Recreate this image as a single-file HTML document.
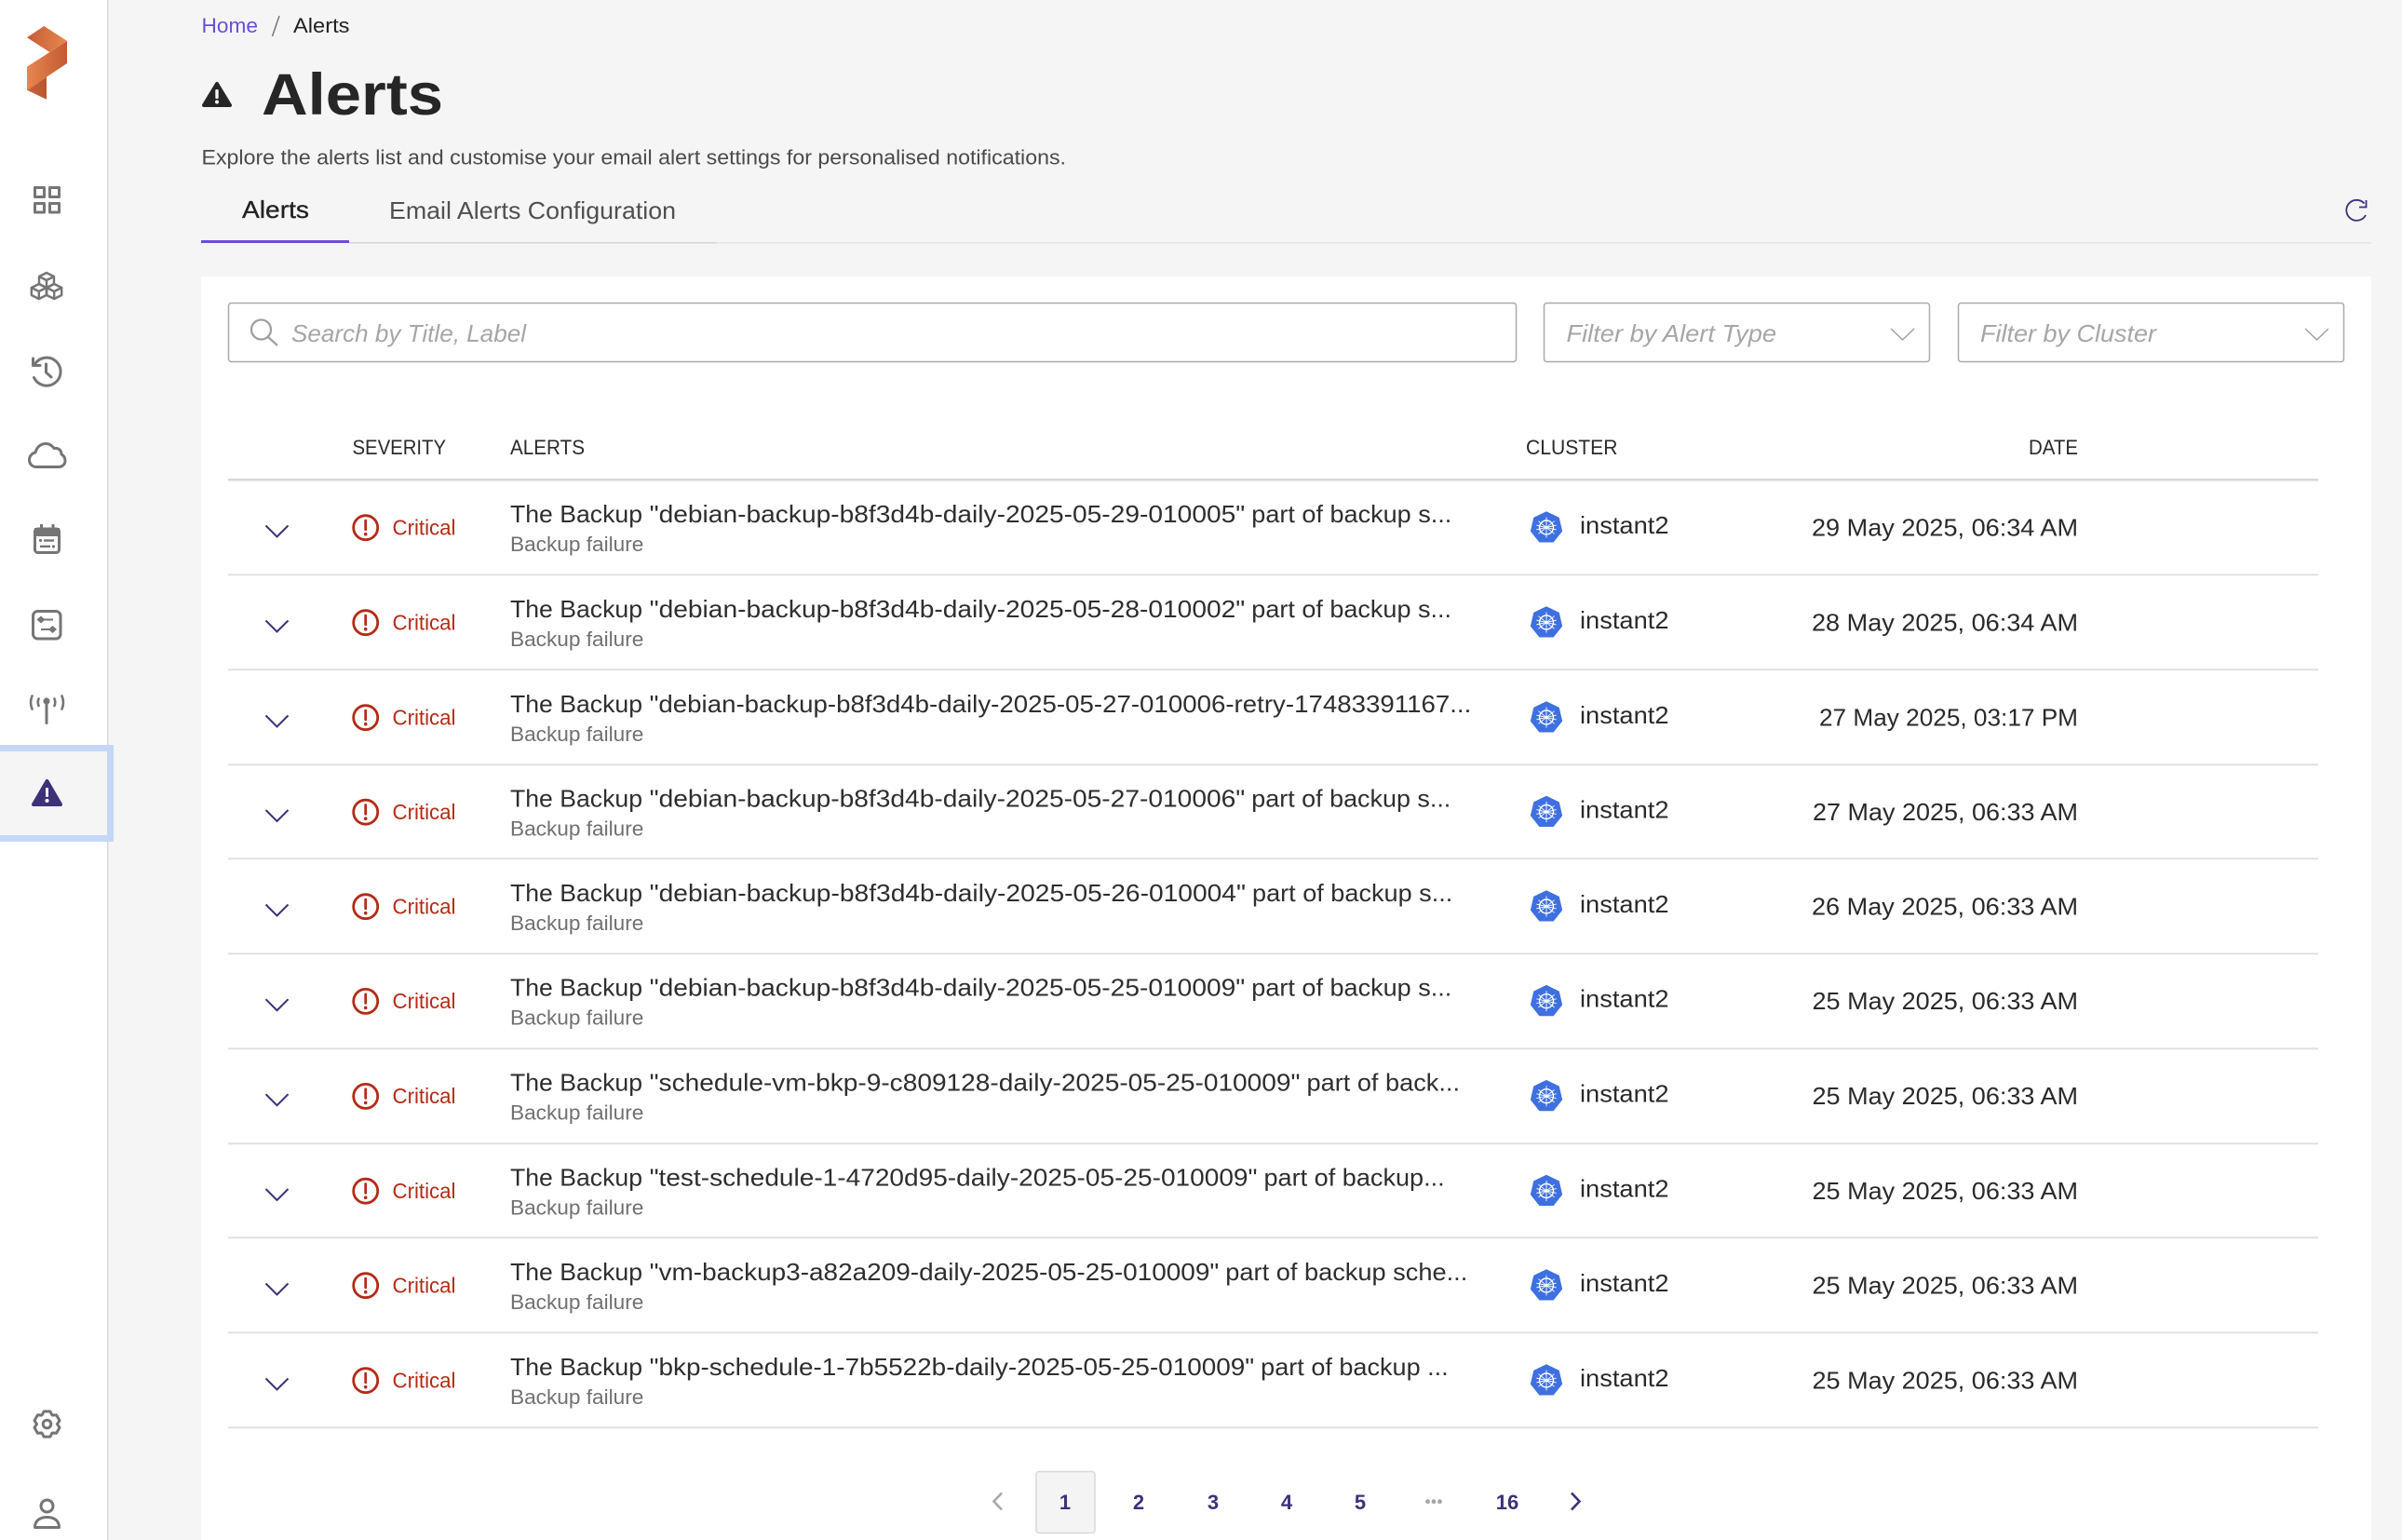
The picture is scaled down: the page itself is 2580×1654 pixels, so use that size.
<!DOCTYPE html>
<html lang="en">
<head>
<meta charset="utf-8">
<title>Alerts</title>
<style>
html,body{margin:0;padding:0;background:#f5f5f5}
svg{display:block}
text{font-family:"Liberation Sans",sans-serif}
.ic{fill:none;stroke:#757575;stroke-width:3;stroke-linecap:round;stroke-linejoin:round}
.th{font-size:22px;fill:#2a2a2a}
.ti{font-size:26px;fill:#2e2e2e}
.su{font-size:22px;fill:#707070}
.cr{font-size:23px;fill:#b42b17}
.cl{font-size:26px;fill:#2a2a2a}
.da{font-size:26px;fill:#2a2a2a}
.ph{font-size:26px;font-style:italic;fill:#a6a6a6}
.pg{font-size:22px;font-weight:bold;fill:#3d3178;text-anchor:middle}
.ln{stroke:#dfdfdf;stroke-width:1.8}
</style>
</head>
<body>
<svg xmlns="http://www.w3.org/2000/svg" width="2580" height="1654" viewBox="0 0 2580 1654">
<defs>
<linearGradient id="g1" x1="0" y1="0" x2="1" y2="0"><stop offset="0" stop-color="#c55c35"/><stop offset="1" stop-color="#e68850"/></linearGradient>
<linearGradient id="g2" x1="0" y1="0" x2="1" y2="0"><stop offset="0" stop-color="#e6874f"/><stop offset="1" stop-color="#c35a32"/></linearGradient>
<linearGradient id="g3" x1="0" y1="0" x2="1" y2="0"><stop offset="0" stop-color="#c9653c"/><stop offset="1" stop-color="#b9552f"/></linearGradient>
<g id="chev"><path d="M285.5 564.5L297.5 576.5L309.5 564.5" fill="none" stroke="#3d3178" stroke-width="2"/></g>
<g id="crit"><circle cx="392.7" cy="566.7" r="13" fill="none" stroke="#b42b17" stroke-width="2.8"/><path d="M392.7 559.2V568.7" stroke="#b42b17" stroke-width="2.8" stroke-linecap="round"/><circle cx="392.7" cy="573.7" r="1.8" fill="#b42b17"/></g>
<g id="k8s"><polygon points="1661,549.8 1674.3,556.2 1677.6,570.4 1668.4,582 1653.6,582 1644.4,570.4 1647.7,556.2" fill="#3f70e0" stroke="#3f70e0" stroke-width="1" stroke-linejoin="round"/><circle cx="1661" cy="566.5" r="7.5" fill="none" stroke="#fff" stroke-width="1.4"/><path d="M1661 555.5V577.5M1652.4 559.7L1669.6 573.3M1669.6 559.7L1652.4 573.3M1650.3 568.9L1671.7 564.1M1671.7 568.9L1650.3 564.1" stroke="#fff" stroke-width=".9"/><circle cx="1661" cy="566.5" r="1.7" fill="#fff"/></g>
<path id="cube" d="M0-8L8-4V4L0 8L-8 4V-4ZM-8-4L0 0L8-4M0 0V8" class="ic" style="stroke-width:2.4"/>
</defs>

<!-- page background -->
<rect width="2580" height="1654" fill="#f5f5f5"/>

<!-- sidebar -->
<rect x="0" y="0" width="115" height="1654" fill="#fff"/>
<rect x="115" y="0" width="1.5" height="1654" fill="#d9d9d9"/>
<polygon points="29,40.3 47.3,28 72,44 53.3,56" fill="url(#g1)"/>
<polygon points="72,44 72,68 29,96.7 29,71.7" fill="url(#g2)"/>
<polygon points="29,96.7 50,82.7 50,106.7" fill="url(#g3)"/>

<g class="ic">
<rect x="37.5" y="201.5" width="10" height="10"/><rect x="53.5" y="201.5" width="10" height="10"/>
<rect x="37.5" y="218.5" width="10" height="9.5"/><rect x="53.5" y="218.5" width="10" height="9.5"/>
</g>
<use href="#cube" x="50" y="301"/><use href="#cube" x="41.8" y="313"/><use href="#cube" x="58.2" y="313"/>
<g class="ic">
<path d="M37.5 391A15 15 0 1 1 36.5 405.5"/><path d="M35.5 385V392.5H43"/><path d="M49.5 391V400L55 405"/>
<path d="M39 501.5C33.5 501.5 31.5 497 31.5 494C31.5 489.5 35 486.5 38 486C39.5 480 44 476.5 49 476.5C53 476.5 56 478.5 58 481.5C63 480.5 66 484 66 488C69 489.5 70 492 70 495C70 499 66.5 501.5 63 501.5Z"/>
</g>
<!-- calendar -->
<rect x="37.5" y="568" width="26" height="25.5" rx="3" fill="none" stroke="#757575" stroke-width="3"/>
<rect x="37" y="567" width="27" height="9" fill="#757575"/>
<rect x="43" y="563" width="3" height="6" fill="#757575"/><rect x="55.5" y="563" width="3" height="6" fill="#757575"/>
<circle cx="43.5" cy="580.5" r="1.6" fill="#757575"/><rect x="47" y="579.3" width="11" height="2.4" fill="#757575"/>
<rect x="43" y="585.7" width="11" height="2.4" fill="#757575"/><circle cx="57.5" cy="587" r="1.6" fill="#757575"/>
<!-- sliders -->
<rect x="35.5" y="656.5" width="29.5" height="29.5" rx="5" class="ic"/>
<path d="M44 661.5L48.5 665.5L44 669.5L39.5 665.5ZM56.5 672L61 676L56.5 680L52 676Z" fill="#757575"/>
<path d="M46 665.5H57M44 676H54" stroke="#757575" stroke-width="2"/>
<!-- antenna -->
<circle cx="50" cy="753" r="3.6" fill="#757575"/>
<path d="M50 755V776.5" class="ic"/>
<path d="M41.5 750.5Q40 754 41.5 758M58.5 750.5Q60 754 58.5 758M34.5 747.5Q31.5 754.5 34.5 761.5M66.5 747.5Q69.5 754.5 66.5 761.5" class="ic" style="stroke-width:2.6"/>
<!-- active item -->
<rect x="0" y="800" width="122" height="104" fill="#c4d7f6"/>
<rect x="0" y="807" width="115" height="90" fill="#f5f5f5"/>
<polygon points="50.5,839 65,864 36,864" fill="#3d3178" stroke="#3d3178" stroke-width="4" stroke-linejoin="round"/>
<rect x="49" y="846" width="3" height="10" rx="1" fill="#fff"/><circle cx="50.5" cy="860" r="2" fill="#fff"/>
<!-- gear -->
<g transform="translate(50.5 1529.5)" class="ic">
<polygon points="-3.39,-13.58 3.39,-13.58 5.5,-9.53 10.07,-9.73 13.46,-3.86 11,0 13.46,3.86 10.07,9.73 5.5,9.53 3.39,13.58 -3.39,13.58 -5.5,9.53 -10.07,9.73 -13.46,3.86 -11,0 -13.46,-3.86 -10.07,-9.73 -5.5,-9.53"/>
<circle r="4.3"/>
</g>
<!-- person -->
<g class="ic">
<circle cx="50.5" cy="1617.5" r="6.5"/>
<path d="M37.5 1640.5C37.5 1633 43 1629.5 50.5 1629.5C58 1629.5 63.5 1633 63.5 1640.5Z"/>
</g>

<!-- header -->
<text x="216.5" y="35" font-size="22" fill="#6c4fd3" textLength="60.5" lengthAdjust="spacingAndGlyphs">Home</text>
<path d="M300 17L292.5 39" stroke="#777" stroke-width="1.5"/>
<text x="315" y="35" font-size="22" fill="#222" textLength="60.5" lengthAdjust="spacingAndGlyphs">Alerts</text>
<polygon points="233,90 247,113 219,113" fill="#262626" stroke="#262626" stroke-width="4" stroke-linejoin="round"/>
<rect x="231.3" y="96" width="3.4" height="10" rx="1" fill="#f5f5f5"/><circle cx="233" cy="109.5" r="2" fill="#f5f5f5"/>
<text x="281" y="123" font-size="63" font-weight="bold" fill="#262626" textLength="195" lengthAdjust="spacingAndGlyphs">Alerts</text>
<text x="216.5" y="176.5" font-size="22.5" fill="#4a4a4a" textLength="928.5" lengthAdjust="spacingAndGlyphs">Explore the alerts list and customise your email alert settings for personalised notifications.</text>
<text x="260" y="234" font-size="26" fill="#222" stroke="#222" stroke-width=".3" textLength="72" lengthAdjust="spacingAndGlyphs">Alerts</text>
<text x="418" y="235" font-size="26" fill="#4f4f4f" textLength="308" lengthAdjust="spacingAndGlyphs">Email Alerts Configuration</text>
<rect x="375" y="260" width="395" height="1.5" fill="#d5d5d5"/>
<rect x="770" y="260" width="1777" height="1.5" fill="#e4e4e4"/>
<rect x="216" y="258" width="159" height="3" fill="#6c4fd3"/>
<path d="M2539.5 218.5A11 11 0 1 0 2541 231M2541.5 215V222.5H2534" fill="none" stroke="#3d3178" stroke-width="1.8"/>

<!-- card -->
<rect x="216" y="297" width="2331" height="1357" fill="#fff"/>

<!-- filters -->
<rect x="245.5" y="325.5" width="1383" height="63" rx="3" fill="#fff" stroke="#aaa" stroke-width="1.5"/>
<circle cx="280.5" cy="354" r="10.5" fill="none" stroke="#a0a0a0" stroke-width="2.3"/>
<path d="M288 362L298 371" stroke="#a0a0a0" stroke-width="2.3"/>
<text x="313" y="367" class="ph" textLength="252" lengthAdjust="spacingAndGlyphs">Search by Title, Label</text>
<rect x="1658.5" y="325.5" width="414" height="63" rx="3" fill="#fff" stroke="#aaa" stroke-width="1.5"/>
<text x="1682.5" y="367" class="ph" textLength="225.5" lengthAdjust="spacingAndGlyphs">Filter by Alert Type</text>
<path d="M2031 353L2043.5 365L2056 353" fill="none" stroke="#a0a0a0" stroke-width="1.4"/>
<rect x="2103.5" y="325.5" width="414" height="63" rx="3" fill="#fff" stroke="#aaa" stroke-width="1.5"/>
<text x="2127" y="367" class="ph" textLength="189" lengthAdjust="spacingAndGlyphs">Filter by Cluster</text>
<path d="M2476 353L2488.5 365L2501 353" fill="none" stroke="#a0a0a0" stroke-width="1.4"/>

<!-- table head -->
<text x="378.5" y="488" class="th" textLength="100.5" lengthAdjust="spacingAndGlyphs">SEVERITY</text>
<text x="548" y="488" class="th" textLength="80" lengthAdjust="spacingAndGlyphs">ALERTS</text>
<text x="1639" y="488" class="th" textLength="98.5" lengthAdjust="spacingAndGlyphs">CLUSTER</text>
<text x="2179" y="488" class="th" textLength="53" lengthAdjust="spacingAndGlyphs">DATE</text>
<rect x="245" y="514" width="2245" height="2.6" fill="#d8d8d8"/>

<!-- rows -->
<g>
<path class="ln" d="M245 617.3H2490"/>
<use href="#chev"/><use href="#crit"/>
<text x="421.5" y="574.5" class="cr" textLength="68" lengthAdjust="spacingAndGlyphs">Critical</text>
<text x="548" y="561" class="ti" textLength="142" lengthAdjust="spacingAndGlyphs">The Backup</text>
<text x="697.6" y="561" class="ti" textLength="639.7" lengthAdjust="spacingAndGlyphs">"debian-backup-b8f3d4b-daily-2025-05-29-010005"</text>
<text x="1344.3" y="561" class="ti" textLength="215" lengthAdjust="spacingAndGlyphs">part of backup s...</text>
<text x="548" y="592" class="su" textLength="143.4" lengthAdjust="spacingAndGlyphs">Backup failure</text>
<use href="#k8s"/>
<text x="1697" y="573" class="cl" textLength="95.5" lengthAdjust="spacingAndGlyphs">instant2</text>
<text x="1946" y="575.5" class="da" textLength="286" lengthAdjust="spacingAndGlyphs">29 May 2025, 06:34 AM</text>
</g>
<g transform="translate(0 102)">
<path class="ln" d="M245 617.3H2490"/>
<use href="#chev"/><use href="#crit"/>
<text x="421.5" y="574.5" class="cr" textLength="68" lengthAdjust="spacingAndGlyphs">Critical</text>
<text x="548" y="561" class="ti" textLength="142" lengthAdjust="spacingAndGlyphs">The Backup</text>
<text x="697.6" y="561" class="ti" textLength="639.7" lengthAdjust="spacingAndGlyphs">"debian-backup-b8f3d4b-daily-2025-05-28-010002"</text>
<text x="1344.3" y="561" class="ti" textLength="214.7" lengthAdjust="spacingAndGlyphs">part of backup s...</text>
<text x="548" y="592" class="su" textLength="143.4" lengthAdjust="spacingAndGlyphs">Backup failure</text>
<use href="#k8s"/>
<text x="1697" y="573" class="cl" textLength="95.5" lengthAdjust="spacingAndGlyphs">instant2</text>
<text x="1946" y="575.5" class="da" textLength="286" lengthAdjust="spacingAndGlyphs">28 May 2025, 06:34 AM</text>
</g>
<g transform="translate(0 204)">
<path class="ln" d="M245 617.3H2490"/>
<use href="#chev"/><use href="#crit"/>
<text x="421.5" y="574.5" class="cr" textLength="68" lengthAdjust="spacingAndGlyphs">Critical</text>
<text x="548" y="561" class="ti" textLength="142" lengthAdjust="spacingAndGlyphs">The Backup</text>
<text x="697.6" y="561" class="ti" textLength="882.7" lengthAdjust="spacingAndGlyphs">"debian-backup-b8f3d4b-daily-2025-05-27-010006-retry-17483391167...</text>
<text x="548" y="592" class="su" textLength="143.4" lengthAdjust="spacingAndGlyphs">Backup failure</text>
<use href="#k8s"/>
<text x="1697" y="573" class="cl" textLength="95.5" lengthAdjust="spacingAndGlyphs">instant2</text>
<text x="1954" y="575.5" class="da" textLength="278" lengthAdjust="spacingAndGlyphs">27 May 2025, 03:17 PM</text>
</g>
<g transform="translate(0 305.5)">
<path class="ln" d="M245 616.8H2490"/>
<use href="#chev"/><use href="#crit"/>
<text x="421.5" y="574.5" class="cr" textLength="68" lengthAdjust="spacingAndGlyphs">Critical</text>
<text x="548" y="561" class="ti" textLength="142" lengthAdjust="spacingAndGlyphs">The Backup</text>
<text x="697.6" y="561" class="ti" textLength="639.7" lengthAdjust="spacingAndGlyphs">"debian-backup-b8f3d4b-daily-2025-05-27-010006"</text>
<text x="1344.3" y="561" class="ti" textLength="214" lengthAdjust="spacingAndGlyphs">part of backup s...</text>
<text x="548" y="592" class="su" textLength="143.4" lengthAdjust="spacingAndGlyphs">Backup failure</text>
<use href="#k8s"/>
<text x="1697" y="573" class="cl" textLength="95.5" lengthAdjust="spacingAndGlyphs">instant2</text>
<text x="1947" y="575.5" class="da" textLength="285" lengthAdjust="spacingAndGlyphs">27 May 2025, 06:33 AM</text>
</g>
<g transform="translate(0 407)">
<path class="ln" d="M245 617.3H2490"/>
<use href="#chev"/><use href="#crit"/>
<text x="421.5" y="574.5" class="cr" textLength="68" lengthAdjust="spacingAndGlyphs">Critical</text>
<text x="548" y="561" class="ti" textLength="142" lengthAdjust="spacingAndGlyphs">The Backup</text>
<text x="697.6" y="561" class="ti" textLength="640.4" lengthAdjust="spacingAndGlyphs">"debian-backup-b8f3d4b-daily-2025-05-26-010004"</text>
<text x="1345" y="561" class="ti" textLength="215.3" lengthAdjust="spacingAndGlyphs">part of backup s...</text>
<text x="548" y="592" class="su" textLength="143.4" lengthAdjust="spacingAndGlyphs">Backup failure</text>
<use href="#k8s"/>
<text x="1697" y="573" class="cl" textLength="95.5" lengthAdjust="spacingAndGlyphs">instant2</text>
<text x="1946" y="575.5" class="da" textLength="286" lengthAdjust="spacingAndGlyphs">26 May 2025, 06:33 AM</text>
</g>
<g transform="translate(0 508.7)">
<path class="ln" d="M245 617.6H2490"/>
<use href="#chev"/><use href="#crit"/>
<text x="421.5" y="574.5" class="cr" textLength="68" lengthAdjust="spacingAndGlyphs">Critical</text>
<text x="548" y="561" class="ti" textLength="142" lengthAdjust="spacingAndGlyphs">The Backup</text>
<text x="697.6" y="561" class="ti" textLength="639.7" lengthAdjust="spacingAndGlyphs">"debian-backup-b8f3d4b-daily-2025-05-25-010009"</text>
<text x="1344.3" y="561" class="ti" textLength="215" lengthAdjust="spacingAndGlyphs">part of backup s...</text>
<text x="548" y="592" class="su" textLength="143.4" lengthAdjust="spacingAndGlyphs">Backup failure</text>
<use href="#k8s"/>
<text x="1697" y="573" class="cl" textLength="95.5" lengthAdjust="spacingAndGlyphs">instant2</text>
<text x="1946.5" y="575.5" class="da" textLength="285.5" lengthAdjust="spacingAndGlyphs">25 May 2025, 06:33 AM</text>
</g>
<g transform="translate(0 610.7)">
<path class="ln" d="M245 617.6H2490"/>
<use href="#chev"/><use href="#crit"/>
<text x="421.5" y="574.5" class="cr" textLength="68" lengthAdjust="spacingAndGlyphs">Critical</text>
<text x="548" y="561" class="ti" textLength="142" lengthAdjust="spacingAndGlyphs">The Backup</text>
<text x="697.6" y="561" class="ti" textLength="698.9" lengthAdjust="spacingAndGlyphs">"schedule-vm-bkp-9-c809128-daily-2025-05-25-010009"</text>
<text x="1403.5" y="561" class="ti" textLength="164.5" lengthAdjust="spacingAndGlyphs">part of back...</text>
<text x="548" y="592" class="su" textLength="143.4" lengthAdjust="spacingAndGlyphs">Backup failure</text>
<use href="#k8s"/>
<text x="1697" y="573" class="cl" textLength="95.5" lengthAdjust="spacingAndGlyphs">instant2</text>
<text x="1946.5" y="575.5" class="da" textLength="285.5" lengthAdjust="spacingAndGlyphs">25 May 2025, 06:33 AM</text>
</g>
<g transform="translate(0 712.5)">
<path class="ln" d="M245 616.8H2490"/>
<use href="#chev"/><use href="#crit"/>
<text x="421.5" y="574.5" class="cr" textLength="68" lengthAdjust="spacingAndGlyphs">Critical</text>
<text x="548" y="561" class="ti" textLength="142" lengthAdjust="spacingAndGlyphs">The Backup</text>
<text x="697.6" y="561" class="ti" textLength="652.9" lengthAdjust="spacingAndGlyphs">"test-schedule-1-4720d95-daily-2025-05-25-010009"</text>
<text x="1357.5" y="561" class="ti" textLength="194.2" lengthAdjust="spacingAndGlyphs">part of backup...</text>
<text x="548" y="592" class="su" textLength="143.4" lengthAdjust="spacingAndGlyphs">Backup failure</text>
<use href="#k8s"/>
<text x="1697" y="573" class="cl" textLength="95.5" lengthAdjust="spacingAndGlyphs">instant2</text>
<text x="1946.5" y="575.5" class="da" textLength="285.5" lengthAdjust="spacingAndGlyphs">25 May 2025, 06:33 AM</text>
</g>
<g transform="translate(0 814)">
<path class="ln" d="M245 617.3H2490"/>
<use href="#chev"/><use href="#crit"/>
<text x="421.5" y="574.5" class="cr" textLength="68" lengthAdjust="spacingAndGlyphs">Critical</text>
<text x="548" y="561" class="ti" textLength="142" lengthAdjust="spacingAndGlyphs">The Backup</text>
<text x="697.6" y="561" class="ti" textLength="611.7" lengthAdjust="spacingAndGlyphs">"vm-backup3-a82a209-daily-2025-05-25-010009"</text>
<text x="1316.3" y="561" class="ti" textLength="260" lengthAdjust="spacingAndGlyphs">part of backup sche...</text>
<text x="548" y="592" class="su" textLength="143.4" lengthAdjust="spacingAndGlyphs">Backup failure</text>
<use href="#k8s"/>
<text x="1697" y="573" class="cl" textLength="95.5" lengthAdjust="spacingAndGlyphs">instant2</text>
<text x="1946.5" y="575.5" class="da" textLength="285.5" lengthAdjust="spacingAndGlyphs">25 May 2025, 06:33 AM</text>
</g>
<g transform="translate(0 916)">
<path class="ln" d="M245 617.3H2490"/>
<use href="#chev"/><use href="#crit"/>
<text x="421.5" y="574.5" class="cr" textLength="68" lengthAdjust="spacingAndGlyphs">Critical</text>
<text x="548" y="561" class="ti" textLength="142" lengthAdjust="spacingAndGlyphs">The Backup</text>
<text x="697.6" y="561" class="ti" textLength="649.6" lengthAdjust="spacingAndGlyphs">"bkp-schedule-1-7b5522b-daily-2025-05-25-010009"</text>
<text x="1354.2" y="561" class="ti" textLength="201.5" lengthAdjust="spacingAndGlyphs">part of backup ...</text>
<text x="548" y="592" class="su" textLength="143.4" lengthAdjust="spacingAndGlyphs">Backup failure</text>
<use href="#k8s"/>
<text x="1697" y="573" class="cl" textLength="95.5" lengthAdjust="spacingAndGlyphs">instant2</text>
<text x="1946.5" y="575.5" class="da" textLength="285.5" lengthAdjust="spacingAndGlyphs">25 May 2025, 06:33 AM</text>
</g>

<!-- pagination -->
<path d="M1076 1603.5L1067.5 1612.5L1076 1621.5" fill="none" stroke="#a8a8a8" stroke-width="2.6"/>
<rect x="1113" y="1580.5" width="63" height="66" rx="3" fill="#f4f4f4" stroke="#d8d8d8" stroke-width="1.5"/>
<text x="1144" y="1621" class="pg">1</text>
<text x="1223" y="1621" class="pg">2</text>
<text x="1303" y="1621" class="pg">3</text>
<text x="1382" y="1621" class="pg">4</text>
<text x="1461" y="1621" class="pg">5</text>
<circle cx="1533.5" cy="1612.7" r="2.4" fill="#a5a5a5"/><circle cx="1540" cy="1612.7" r="2.4" fill="#a5a5a5"/><circle cx="1546.5" cy="1612.7" r="2.4" fill="#a5a5a5"/>
<text x="1619" y="1621" class="pg">16</text>
<path d="M1688 1603.5L1696.5 1612.5L1688 1621.5" fill="none" stroke="#3d3178" stroke-width="2.6"/>
</svg>
</body>
</html>
